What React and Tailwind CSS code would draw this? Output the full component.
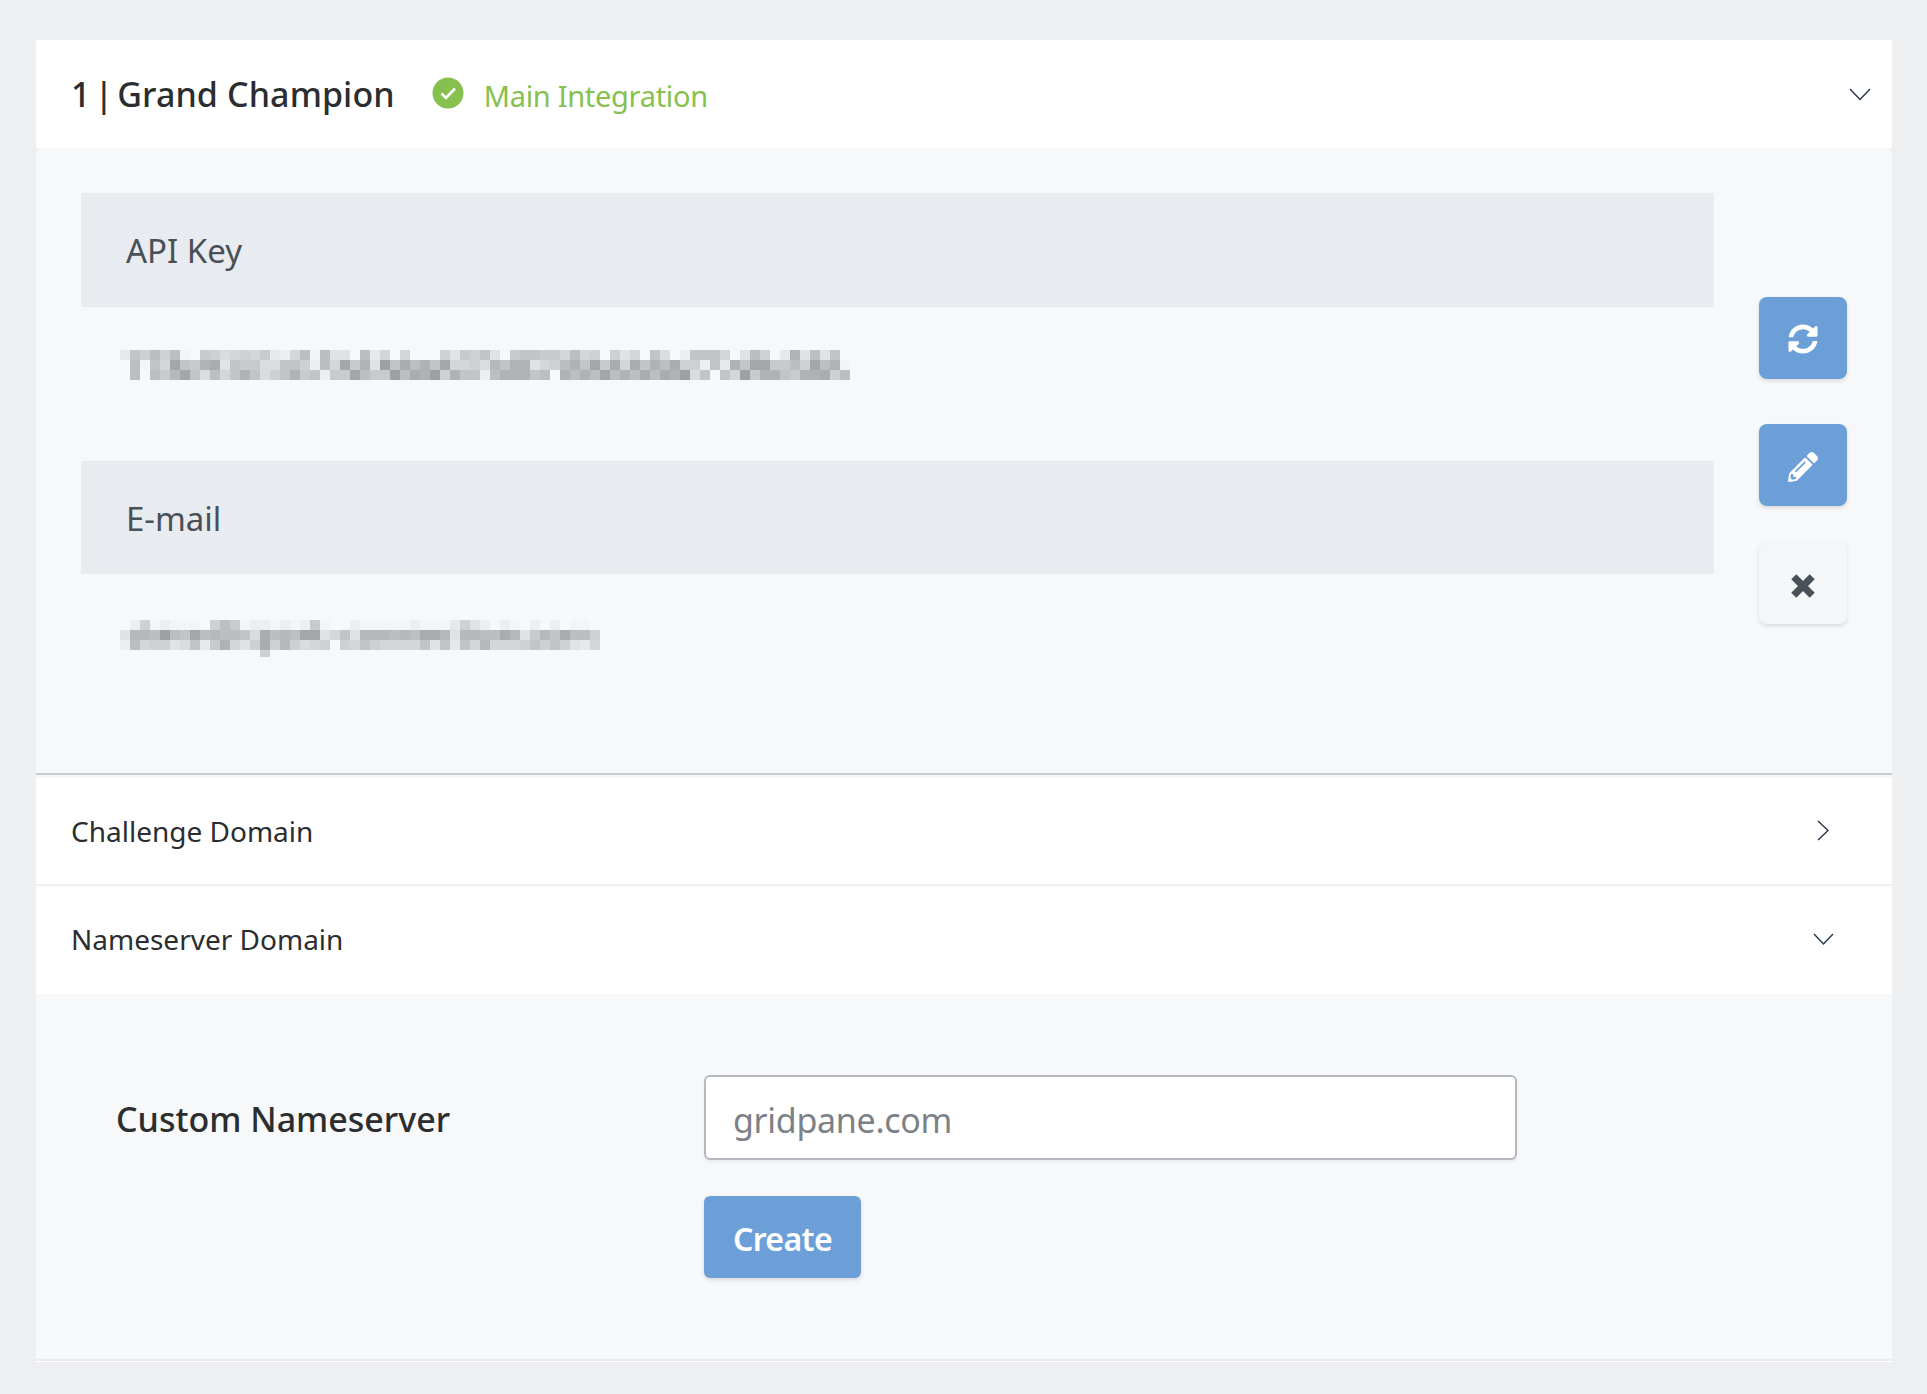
import { FaSyncAlt, FaPencilAlt } from "react-icons/fa";

const API_ROWS = [
  ["c6858", "5ef78", "a9897", "cd95e", "5bbf5", "c9f9f", "ff8b7", "8", "6bf76", "67795", "98f8b", "9f6af", "d6669", "fb58f", "c3b5b", "6f"].join(""),
  ["f5e69", "16732", "b677a", "a668d", "59173", "b0625", "36199", "8", "a4633", "b9853", "61729", "26352", "88d6c", "36117", "75815", "3e"].join(""),
  ["f5f57", "416a5", "9636a", "86376", "d7715", "77052", "30836", "6d", "53336", "5f353", "51535", "25230", "a6f69", "07336", "73328", "5f"].join(""),
];

const MAIL_ROWS = [
  ["fd8ed", "eeef8", "57edd", "eded7", "effde", "eeeed", "eeec8", "bdfde", "fdfdf", "eef"].join(""),
  ["b4450", "56154", "556a2", "54511", "b96b4", "44545", "224b4", "45524", "b7462", "558"].join(""),
  ["d5988", "ba6c7", "39b82", "848a9", "8f896", "89999", "6b6c6", "94999", "86868", "bc9"].join(""),
];

function Mosaic({ rows, extra }) {
  const cols = Math.max(...rows.map((r) => r.length));
  const cells = [];
  rows.forEach((row, r) => {
    [...row].forEach((ch, c) => {
      const g = 158 + parseInt(ch, 16) * 6;
      if (ch !== "f") cells.push(<rect key={r + "-" + c} x={c * 10} y={r * 10} width="10" height="10" fill={`rgb(${g},${g + 2},${g + 4})`} />);
    });
  });
  return (
    <svg width={cols * 10} height={40} className="block">
      {cells}
      {extra}
    </svg>
  );
}

const Chevron = ({ className, d, w, h }) => (
  <svg width={w} height={h} viewBox={`0 0 ${w} ${h}`} fill="none" stroke="#2b3a4a" strokeWidth="1.5" className={className}>
    <path d={d} />
  </svg>
);

const IconBtn = ({ children, light, className = "" }) => (
  <div className={`w-[88px] h-[82px] rounded-[8px] flex items-center justify-center shadow-[0_2px_4px_rgba(0,0,0,0.12)] ${light ? "bg-[#f5f6f8] text-[#495057]" : "bg-[#6c9fd8] text-white"} ${className}`}>
    {children}
  </div>
);

export default function App() {
  return (
    <div className="min-h-[1394px] bg-[#eeeff1] pt-[40px] px-[36px] text-[#2b2d2f]" style={{ fontFamily: '"Noto Sans", sans-serif' }}>
      <div className="w-[1856px]">
        <div className="h-[108px] bg-white flex items-center pl-[35px] pr-[21px]">
          <span className="text-[34px] font-medium tracking-[0.1px] leading-none whitespace-pre">
            <span className="[word-spacing:-5px]">1 | </span>Grand Champion
          </span>
          <svg width="32" height="32" viewBox="0 0 32 32" className="ml-[37px] mb-[2px]">
            <circle cx="16" cy="16" r="15.5" fill="#86c04f" />
            <path d="M9.5 16.5l4.5 4.5 9-9.5" fill="none" stroke="#fff" strokeWidth="2.6" />
          </svg>
          <span className="ml-[20px] mt-[2px] text-[#86c04f] text-[29px] tracking-[-0.3px] leading-none">Main Integration</span>
          <Chevron className="ml-auto" w={22} h={13} d="M1 1l10 10.5L21 1" />
        </div>

        <div className="h-[625px] bg-[#f6f8fa] rounded-t-[6px] flex pl-[45px] pt-[45px] gap-[45px]">
          <div className="w-[1633px]">
            <div className="h-[114px] bg-[#e8ebef] flex items-center pl-[45px] pt-[2px] text-[33px] text-[#495057]">API Key</div>
            <div className="h-[154px] pt-[43px] pl-[39px]"><Mosaic rows={API_ROWS} /></div>
            <div className="h-[113px] bg-[#e8ebef] flex items-center pl-[45px] pt-[2px] text-[33px] text-[#495057]">E-mail</div>
            <div className="pt-[46px] pl-[39px]">
              <Mosaic rows={MAIL_ROWS} extra={<rect x="140" y="30" width="10" height="7" fill="rgb(205,207,209)" />} />
            </div>
          </div>
          <div className="pt-[104px] flex flex-col">
            <IconBtn><FaSyncAlt size={30} className="mt-[2px]" /></IconBtn>
            <IconBtn className="mt-[45px]"><FaPencilAlt size={30} className="mt-[3px]" /></IconBtn>
            <IconBtn light className="mt-[36px]">
              <svg width="26" height="26" viewBox="0 0 24 24" className="mt-[6px]" fill="none" stroke="currentColor" strokeWidth="6.6">
                <path d="M3.5 3.5l17 17M20.5 3.5l-17 17" />
              </svg>
            </IconBtn>
          </div>
        </div>

        <div className="h-[2px] bg-[#c7ccd4]" />
        <div className="h-[3px] bg-[#f6f8fa]" />

        <div className="h-[108px] bg-white flex items-center pl-[35px] pr-[63px] text-[28px] border-b-2 border-[#eeeff1]">
          <span>Challenge Domain</span>
          <Chevron className="ml-auto mb-[2px]" w={12} h={21} d="M1 1l10 9.5L1 20" />
        </div>
        <div className="h-[108px] bg-white flex items-center pl-[35px] pr-[58px] pb-[2px] text-[28px]">
          <span>Nameserver Domain</span>
          <Chevron className="ml-auto" w={21} h={13} d="M1 1l9.5 10L20 1" />
        </div>

        <div className="h-[367px] bg-[#f6f8fa] border-b-2 border-[#e9ebee] flex pt-[81px] pl-[80px]">
          <label className="w-[588px] h-[84px] pt-[5px] flex items-center text-[34px] font-medium">Custom Nameserver</label>
          <div>
            <input
              readOnly
              placeholder="gridpane.com"
              className="block w-[813px] h-[85px] bg-white border-2 border-[#b5b9bf] rounded-[6px] pl-[27px] pr-[28px] pt-[5px] text-[34px] tracking-[-0.3px] outline-none placeholder:text-[#7b8186] shadow-[0_2px_3px_rgba(0,0,0,0.06)]"
            />
            <button className="mt-[36px] w-[157px] h-[82px] pt-[4px] bg-[#6c9fd8] text-white rounded-[6px] text-[32px] font-semibold tracking-[-0.6px] shadow-[0_2px_4px_rgba(0,0,0,0.12)]">Create</button>
          </div>
        </div>
        <div className="h-px bg-white" />
      </div>
    </div>
  );
}
